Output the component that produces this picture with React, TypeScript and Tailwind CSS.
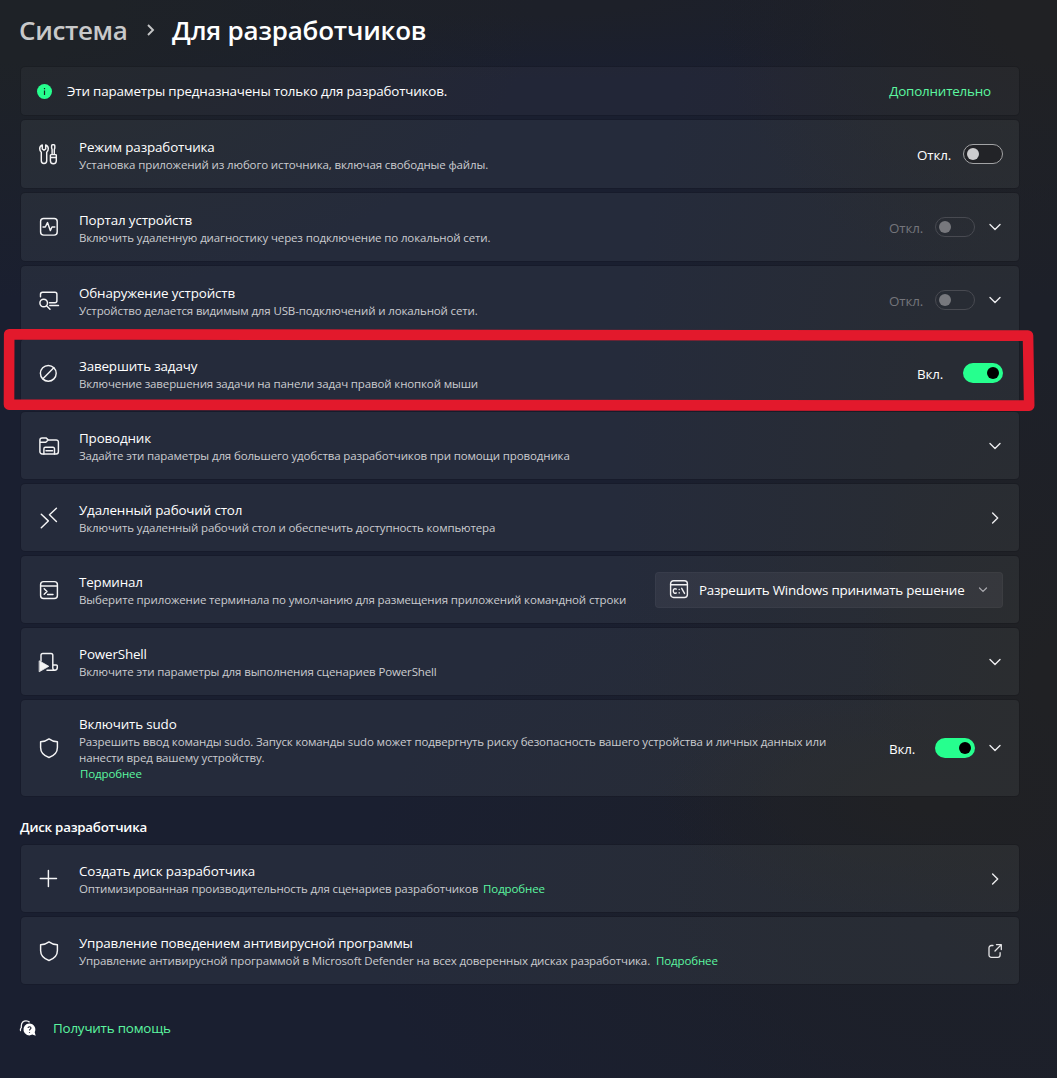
import type { ReactNode } from "react";

type Name =
  | "tools" | "pulse" | "discover" | "block" | "folder" | "remote" | "terminal" | "script" | "shield" | "plus";

const paths: Record<Name, ReactNode> = {
  tools: (
    <>
      <path d="M3.300 .9 V5 L5 6.200 L6.700 5 V.9 C8.500 1.600 9.300 3.200 9.300 4.800 C9.300 6.400 8.600 7.500 7.700 8.200 V16.800 A2.700 2.700 0 0 1 2.300 16.800 V8.200 C1.400 7.500 .7 6.400 .7 4.800 C.7 3.200 1.500 1.600 3.300 .9Z" />
      <path d="M12.600 1.700 A.9 .9 0 0 1 13.500 .8 H14.900 A.9 .9 0 0 1 15.800 1.700 V4 L15.300 5.500 V10.400 M12.600 1.700 V4 L13.100 5.500 V10.400 M12 10.600 H16.600 A.7 .7 0 0 1 17.300 11.300 V16.800 A2.900 2.900 0 0 1 11.400 16.800 V11.300 A.7 .7 0 0 1 12 10.600 Z M11.400 13.400 H17.300" />
    </>
  ),
  pulse: (
    <>
      <rect x="1.600" y="1.500" width="16.600" height="16.600" rx="3" />
      <path d="M4 10 H6.300 L8.500 5.600 L11.300 13.600 L13 10 H15.800" />
    </>
  ),
  discover: (
    <>
      <path d="M1.500 6.800 V4.300 A2 2 0 0 1 3.500 2.300 H15.900 A2 2 0 0 1 17.900 4.300 V10.700 A2 2 0 0 1 15.900 12.700 H10.500" />
      <circle cx="4.700" cy="13" r="3.800" />
      <path d="M7.500 15.800 L11 19.300 M10.800 15.400 H19.500" />
    </>
  ),
  block: (
    <>
      <circle cx="9.300" cy="10.300" r="7.900" />
      <path d="M3.900 15.800 L14.800 4.800" />
    </>
  ),
  folder: (
    <>
      <path d="M.9 6.300 V4 A2.200 2.200 0 0 1 3.100 1.900 H7 L9.200 3.900 H17.200 A2.200 2.200 0 0 1 19.400 6.100 V15.800 A2.200 2.200 0 0 1 17.200 18 H3.100 A2.200 2.200 0 0 1 .9 15.800 Z M.9 6.200 H6.800 L9.200 4" />
      <path d="M4.900 18 V12.800 A1.500 1.500 0 0 1 6.400 11.300 H14 A1.500 1.500 0 0 1 15.500 12.800 V18 M7 14.800 H13.500" />
    </>
  ),
  remote: <path d="M2.300 6.300 L9.300 12.900 L2.300 19.700 M17.400 .3 L10.500 6.800 L17.400 13.500" />,
  terminal: (
    <>
      <rect x="1.600" y="1.600" width="16.800" height="16.800" rx="3" />
      <path d="M1.600 6 H18.400 M5.200 8.700 L8 11.500 L5.200 14.300 M8.600 14.500 H14" />
    </>
  ),
  script: (
    <>
      <path d="M2 9 V3.200 A1.800 1.800 0 0 1 3.800 1.400 H12 A1.800 1.800 0 0 1 13.800 3.200 V13 H17.400 A.9 .9 0 0 1 18.300 13.900 V15.500 A2.700 2.700 0 0 1 15.600 18.200 H8 M13.800 13 V16 A2.100 2.100 0 0 0 15.900 18.200" />
      <path d="M.5 9 L9.800 14.300 L.5 19.600Z" fill="currentColor" strokeWidth=".8" />
    </>
  ),
  shield: (
    <path d="M10 .9 C12.500 2.800 15.200 3.600 18.400 3.800 V9.500 C18.400 14.300 15.400 17.600 10 19.500 C4.600 17.600 1.600 14.300 1.600 9.500 V3.800 C4.800 3.600 7.500 2.800 10 .9Z" />
  ),
  plus: <path d="M9.400 1.500 V17.500 M1.300 9.500 H17.500" />,
};

function Icon({ name }: { name: Name }) {
  return (
    <svg viewBox="0 0 20 20" className="h-5 w-5 shrink-0 overflow-visible text-[#f4f4f5]" fill="none" stroke="currentColor" strokeWidth="1.450" strokeLinejoin="round" strokeLinecap="round">
      {paths[name]}
    </svg>
  );
}

function Chevron({ right = false }: { right?: boolean }) {
  return (
    <svg viewBox="0 0 16 16" className="h-4 w-4 shrink-0 text-[#ececee]" fill="none" stroke="currentColor" strokeWidth="1.400" strokeLinecap="round" strokeLinejoin="round">
      {right ? <path d="M5.600 3 L10.700 8 L5.600 13" /> : <path d="M3 5.400 L8 10.400 L13 5.400" />}
    </svg>
  );
}

function Toggle({ on = false, disabled = false }: { on?: boolean; disabled?: boolean }) {
  if (on)
    return (
      <span className="flex h-5 w-10 shrink-0 items-center justify-end rounded-full bg-[#26ff8e] pr-1">
        <span className="h-3 w-3 rounded-full bg-black" />
      </span>
    );
  return disabled ? (
    <span className="flex h-5 w-10 shrink-0 items-center rounded-full border border-[#484a51] pl-[3px]">
      <span className="h-3 w-3 rounded-full bg-[#77787d]" />
    </span>
  ) : (
    <span className="flex h-5 w-10 shrink-0 items-center rounded-full border border-[#a2a3a5] bg-[#222327] pl-[3px]">
      <span className="h-3 w-3 rounded-full bg-[#cdcdcf]" />
    </span>
  );
}

function State({ children, dim = false, wide = false }: { children: ReactNode; dim?: boolean; wide?: boolean }) {
  return (
    <span className={`mt-[3px] shrink-0 text-[13.400px] tracking-[-0.150px] ${wide ? "w-[46px]" : "w-[34px]"} ${dim ? "text-[#74757b]" : "text-white"}`}>
      {children}
    </span>
  );
}

function Card({ icon, title, size = "short", children, right }: {
  icon: Name; title: string; size?: "short" | "medium" | "tall"; children: ReactNode; right: ReactNode;
}) {
  const height = { short: "h-[67px]", medium: "h-[68px]", tall: "h-24" }[size];
  return (
    <div className={`flex items-center rounded-[4px] bg-[#f4f8ff]/[0.053] pl-[18px] pr-4 shadow-[0_0_0_1px_rgba(0,0,0,0.1)] ${height}`}>
      <Icon name={icon} />
      <div className={`ml-5 min-w-0 flex-1 whitespace-nowrap ${size === "medium" ? "pt-[2px]" : ""}`}>
        <div className="text-[13.400px] leading-5 tracking-[-0.150px] text-white">{title}</div>
        <div className="text-[11.500px] leading-4 tracking-[-0.130px] text-[#cbccd0]">{children}</div>
      </div>
      {right}
    </div>
  );
}

function Link({ children, className = "" }: { children: ReactNode; className?: string }) {
  return <a className={`text-[#5cf7a0] ${className}`}>{children}</a>;
}

export default function App() {
  return (
    <main className="relative h-[1078px] w-[1057px] overflow-hidden bg-[#1a1f30] bg-[radial-gradient(ellipse_540px_300px_at_0px_0px,#1e2227_20%,transparent),radial-gradient(ellipse_200px_330px_at_1057px_680px,#202124_10%,transparent),radial-gradient(ellipse_280px_120px_at_940px_800px,#202124_10%,transparent),radial-gradient(ellipse_340px_300px_at_1057px_0px,#202124_20%,transparent),radial-gradient(ellipse_440px_900px_at_1057px_540px,#1d2029_35%,transparent),radial-gradient(ellipse_700px_80px_at_500px_0px,#1d2029_20%,transparent),radial-gradient(ellipse_700px_400px_at_1057px_900px,#1d2029_20%,transparent)] pl-[21px] pr-[38px] font-['Open_Sans','Noto_Sans',sans-serif]">
      <header className="flex h-[67px] items-center whitespace-nowrap pb-[8px] text-[26px] font-[650] leading-9">
        <span className="-ml-[2px] w-[109px] tracking-[-0.350px] text-[#c8c9ca]">Система</span>
        <svg viewBox="0 0 10 14" className="ml-[18px] h-[14px] w-[10px]" fill="none" stroke="#c4c5c6" strokeWidth="1.900"><path d="M2 2 L7 7 L2 12" /></svg>
        <h1 className="ml-4 tracking-[-0.200px] text-white">Для разработчиков</h1>
      </header>

      <div className="flex h-12 items-center rounded-[4px] bg-[#f4f8ff]/[0.035] pl-4 pr-7 shadow-[0_0_0_1px_rgba(0,0,0,0.1)]">
        <svg viewBox="0 0 15 15" className="h-[15px] w-[15px]"><circle cx="7.500" cy="7.500" r="7.500" fill="#26ff8e" /><path d="M7.500 6.500 V11 M7.500 4 V5.300" stroke="#14221c" strokeWidth="1.200" /></svg>
        <span className="ml-[15px] flex-1 text-[13.400px] leading-5 tracking-[-0.170px] text-white">Эти параметры предназначены только для разработчиков.</span>
        <Link className="text-[13.400px] leading-5 tracking-[-0.180px]">Дополнительно</Link>
      </div>

      <section className="mt-[5px] flex flex-col gap-[5px]">
        <Card icon="tools" size="medium" title="Режим разработчика" right={<div className="flex items-center gap-3"><State>Откл.</State><Toggle /></div>}>
          <span>Установка приложений из любого источника, включая свободные файлы.</span>
        </Card>
        <Card icon="pulse" size="medium" title="Портал устройств" right={<div className="flex items-center gap-3"><State dim>Откл.</State><Toggle disabled /><Chevron /></div>}>
          <span>Включить удаленную диагностику через подключение по локальной сети.</span>
        </Card>
        <Card icon="discover" size="medium" title="Обнаружение устройств" right={<div className="flex items-center gap-3"><State dim>Откл.</State><Toggle disabled /><Chevron /></div>}>
          <span>Устройство делается видимым для USB-подключений и локальной сети.</span>
        </Card>
        <Card icon="block" size="medium" title="Завершить задачу" right={<div className="flex items-center"><State wide>Вкл.</State><Toggle on /></div>}>
          <span>Включение завершения задачи на панели задач правой кнопкой мыши</span>
        </Card>
        <Card icon="folder" title="Проводник" right={<Chevron />}>
          <span>Задайте эти параметры для большего удобства разработчиков при помощи проводника</span>
        </Card>
        <Card icon="remote" title="Удаленный рабочий стол" right={<Chevron right />}>
          <span>Включить удаленный рабочий стол и обеспечить доступность компьютера</span>
        </Card>
        <Card icon="terminal" title="Терминал" right={
          <button className="flex h-9 w-[348px] items-center rounded-[4px] border border-white/[0.03] bg-[#fff6fa]/[0.06] pl-[13px] pr-3">
            <svg viewBox="0 0 20 20" className="h-5 w-5 overflow-visible" fill="none" stroke="#f0f0f2" strokeWidth="1.400" strokeLinecap="round">
              <rect x="1.600" y=".7" width="16.800" height="16.800" rx="3" /><path d="M1.600 4.700 H18.400" />
              <path d="M7.300 9.100 C5.900 8.100 4.300 9.100 4.300 11 C4.300 12.900 5.900 13.900 7.300 12.900 M10.200 9.400 V9.600 M10.200 12.800 V13 M12.700 8.300 L15.500 13.400" />
            </svg>
            <span className="ml-[10px] flex-1 whitespace-nowrap pt-px text-left text-[13.400px] tracking-[-0.210px] text-white">Разрешить Windows принимать решение</span>
            <svg viewBox="0 0 14 14" className="h-[14px] w-[14px]" fill="none" stroke="#a9a9ae" strokeWidth="1.200" strokeLinecap="round"><path d="M3.500 5 L7 8.500 L10.500 5" /></svg>
          </button>
        }>
          <span>Выберите приложение терминала по умолчанию для размещения приложений командной строки</span>
        </Card>
        <Card icon="script" title="PowerShell" right={<Chevron />}>
          <span>Включите эти параметры для выполнения сценариев PowerShell</span>
        </Card>
        <Card icon="shield" size="tall" title="Включить sudo" right={<div className="flex items-center"><State wide>Вкл.</State><Toggle on /><span className="ml-3"><Chevron /></span></div>}>
          <span>Разрешить ввод команды sudo. Запуск команды sudo может подвергнуть риску безопасность вашего устройства и личных данных или</span>
          <br /><span>нанести вред вашему устройству.</span>
          <br /><Link className="ml-px">Подробнее</Link>
        </Card>
      </section>

      <h2 className="-ml-px flex h-[49px] items-center pt-[14px] text-[13.300px] font-[650] tracking-[-0.230px] text-white">Диск разработчика</h2>

      <section className="flex flex-col gap-[5px]">
        <Card icon="plus" title="Создать диск разработчика" right={<Chevron right />}>
          <span>Оптимизированная производительность для сценариев разработчиков</span>
          <Link className="ml-[5px]">Подробнее</Link>
        </Card>
        <Card icon="shield" title="Управление поведением антивирусной программы" right={
          <svg viewBox="0 0 16 16" className="h-4 w-4" fill="none" stroke="#e6e6e8" strokeWidth="1.300" strokeLinecap="round" strokeLinejoin="round"><path d="M6 2.500 H4.300 A2.300 2.300 0 0 0 2 4.800 V12 A2.300 2.300 0 0 0 4.300 14.300 H10.800 A2.300 2.300 0 0 0 13.100 12 V9.700 M9.500 1.700 H14.300 V6.500 M14.100 1.900 L8 8" /></svg>
        }>
          <span>Управление антивирусной программой в Microsoft Defender на всех доверенных дисках разработчика.</span>
          <Link className="ml-[6px]">Подробнее</Link>
        </Card>
      </section>

      <footer className="-ml-px mt-[34px] flex items-center">
        <svg viewBox="0 0 16 16" className="h-4 w-4 overflow-visible" fill="none">
          <path d="M.8 11 C.3 10.700 .2 9 1 8.300 M1.300 8.200 V6 C1.300 2.500 3.600 .8 6 .8 C7.600 .8 8.800 1.400 9.600 2.300" stroke="#f4f4f5" strokeWidth="1.300" />
          <path d="M9.500 3.600 A5.900 5.900 0 1 0 12.300 14.600 L15.700 15.800 L14.700 12.200 A5.900 5.900 0 0 0 9.500 3.600Z" fill="#fff" />
          <path d="M8 8 C8 6.300 11 6.300 11 8 C11 9.200 9.500 9.200 9.500 10.500 M9.500 12 V12.800" stroke="#1b1f30" strokeWidth="1.100" />
        </svg>
        <Link className="ml-[17px] text-[13.400px] leading-5 tracking-[-0.200px]">Получить помощь</Link>
      </footer>

      <svg viewBox="0 0 1057 100" className="pointer-events-none absolute left-0 top-[320px] h-[100px] w-[1057px]" fill="none">
        <path d="M9.200 14.300 L1028 15.600 L1029.200 85.600 L9 84.600Z" stroke="#e3192c" strokeWidth="10.600" strokeLinejoin="round" />
      </svg>
    </main>
  );
}
